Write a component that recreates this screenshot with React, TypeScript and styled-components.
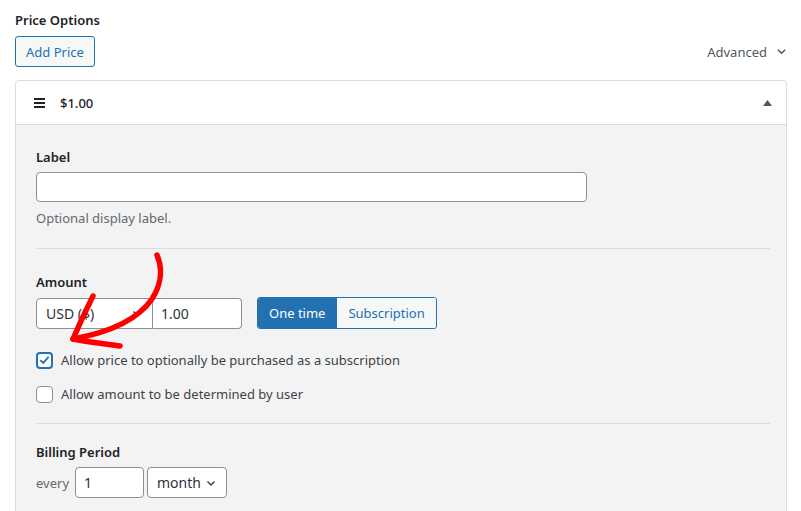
import React from 'react';
import styled, { createGlobalStyle } from 'styled-components';

const GlobalStyle = createGlobalStyle`
  html, body {
    margin: 0;
    padding: 0;
    background: #ffffff;
  }
  body {
    font-family: 'Noto Sans', 'Open Sans', Arial, sans-serif;
    color: #3c434a;
    font-size: 13px;
  }
  * {
    box-sizing: border-box;
  }
`;

export default function App() {
  return (
    <>
      <GlobalStyle />
      <Wrapper>
        <Heading>Price Options</Heading>
        <Toolbar>
          <OutlineButton>Add Price</OutlineButton>
          <Advanced>
            Advanced
            <svg width="11" height="11" viewBox="0 0 12 12">
              <path d="M2 4 L6 8 L10 4" fill="none" stroke="#50575e" strokeWidth="1.6" />
            </svg>
          </Advanced>
        </Toolbar>

        <Panel>
          <PanelHeader>
            <HeaderLeft>
              <svg width="11" height="10" viewBox="0 0 11 10">
                <rect x="0" y="0" width="11" height="2" fill="#1d2327" />
                <rect x="0" y="4" width="11" height="2" fill="#1d2327" />
                <rect x="0" y="8" width="11" height="2" fill="#1d2327" />
              </svg>
              <PriceTitle>$1.00</PriceTitle>
            </HeaderLeft>
            <svg width="9" height="6" viewBox="0 0 9 6">
              <path d="M0 6 L4.5 0 L9 6 Z" fill="#50575e" />
            </svg>
          </PanelHeader>

          <PanelBody>
            <Section>
              <FieldLabel>Label</FieldLabel>
              <TextInput width={551} />
              <Hint>Optional display label.</Hint>
            </Section>

            <Divider before={21} after={24} />

            <Section>
              <FieldLabel>Amount</FieldLabel>
              <AmountRow>
                <Joined>
                  <SelectBox width={117} joined="left">
                    USD ($)
                    <Chevron />
                  </SelectBox>
                  <ValueBox width={89} joined="right">1.00</ValueBox>
                </Joined>
                <Segmented>
                  <Segment active>One time</Segment>
                  <Segment>Subscription</Segment>
                </Segmented>
              </AmountRow>
              <Checks>
                <CheckRow>
                  <CheckBox checked>
                    <svg width="14" height="14" viewBox="0 0 14 14">
                      <path d="M2.5 7.2 L5.6 10.2 L11.5 3.6" fill="none" stroke="#2271b1" strokeWidth="2" />
                    </svg>
                  </CheckBox>
                  Allow price to optionally be purchased as a subscription
                </CheckRow>
                <CheckRow>
                  <CheckBox />
                  Allow amount to be determined by user
                </CheckRow>
              </Checks>
            </Section>

            <Divider before={20} after={19} />

            <Section>
              <FieldLabel>Billing Period</FieldLabel>
              <BillingRow>
                <span>every</span>
                <ValueBox width={69}>1</ValueBox>
                <SelectBox width={80}>
                  month
                  <Chevron />
                </SelectBox>
              </BillingRow>
            </Section>
          </PanelBody>
        </Panel>

        <ArrowOverlay width="120" height="110" viewBox="0 0 120 110">
          <path
            d="M102 6 C108 20 106 36 97 50 C86 66 62 82 18 90"
            fill="none"
            stroke="#ff0000"
            strokeWidth="5.5"
            strokeLinecap="round"
          />
          <path
            d="M38 47 C31 61 24 76 18 90 C34 93 50 95 65 97"
            fill="none"
            stroke="#ff0000"
            strokeWidth="5.5"
            strokeLinecap="round"
            strokeLinejoin="round"
          />
        </ArrowOverlay>
      </Wrapper>
    </>
  );
}

function Chevron() {
  return (
    <svg width="10" height="10" viewBox="0 0 10 10">
      <path d="M1.5 3.5 L5 7 L8.5 3.5" fill="none" stroke="#3c434a" strokeWidth="1.5" />
    </svg>
  );
}

const Wrapper = styled.div`
  position: relative;
  padding: 11px 14px 0 15px;
  height: 511px;
  overflow: hidden;
`;

const Heading = styled.div`
  font-size: 13px;
  font-weight: 600;
  line-height: 18px;
  color: #1d2327;
`;

const Toolbar = styled.div`
  display: flex;
  justify-content: space-between;
  align-items: center;
  margin-top: 7px;
`;

const OutlineButton = styled.button`
  height: 31px;
  padding: 0 10px;
  border: 1px solid #2271b1;
  border-radius: 3px;
  background: #f6f7f7;
  color: #2271b1;
  font-family: inherit;
  font-size: 13px;
`;

const Advanced = styled.div`
  display: flex;
  align-items: center;
  gap: 9px;
  color: #50575e;
  font-size: 13px;
`;

const Panel = styled.div`
  margin-top: 13px;
  border: 1px solid #dcdcde;
  border-radius: 4px;
  background: #f3f3f3;
`;

const PanelHeader = styled.div`
  height: 44px;
  display: flex;
  align-items: center;
  justify-content: space-between;
  padding: 0 14px 0 18px;
  background: #ffffff;
  border-bottom: 1px solid #dcdcde;
  border-radius: 4px 4px 0 0;
`;

const HeaderLeft = styled.div`
  display: flex;
  align-items: center;
  gap: 15px;
`;

const PriceTitle = styled.span`
  font-size: 13px;
  font-weight: 500;
  color: #1d2327;
`;

const PanelBody = styled.div`
  padding: 23px 16px 20px 20px;
`;

const Section = styled.div`
  display: flex;
  flex-direction: column;
`;

const FieldLabel = styled.div`
  font-size: 13px;
  font-weight: 600;
  line-height: 18px;
  color: #1d2327;
  margin-bottom: 6px;
`;

const TextInput = styled.div<{ width: number }>`
  width: ${(p) => p.width}px;
  height: 30px;
  background: #ffffff;
  border: 1px solid #8c8f94;
  border-radius: 4px;
`;

const Hint = styled.div`
  margin-top: 7px;
  line-height: 18px;
  font-size: 13px;
  color: #646970;
`;

const Divider = styled.hr<{ before: number; after: number }>`
  border: 0;
  border-top: 1px solid #dcdcde;
  margin: ${(p) => p.before}px 0 ${(p) => p.after}px;
`;

const AmountRow = styled.div`
  display: flex;
  align-items: center;
  gap: 15px;
`;

const Joined = styled.div`
  display: flex;
`;

const fieldBase = `
  height: 31px;
  display: flex;
  align-items: center;
  background: #ffffff;
  border: 1px solid #8c8f94;
  color: #2c3338;
  font-size: 14px;
`;

const SelectBox = styled.div<{ width: number; joined?: 'left' | 'right' }>`
  ${fieldBase}
  width: ${(p) => p.width}px;
  justify-content: space-between;
  padding: 0 10px 0 9px;
  border-radius: ${(p) => (p.joined === 'left' ? '4px 0 0 4px' : '4px')};
`;

const ValueBox = styled.div<{ width: number; joined?: 'left' | 'right' }>`
  ${fieldBase}
  width: ${(p) => p.width}px;
  padding: 0 8px;
  border-radius: ${(p) => (p.joined === 'right' ? '0 4px 4px 0' : '4px')};
  ${(p) => (p.joined === 'right' ? 'border-left: 0;' : '')}
`;

const Segmented = styled.div`
  display: flex;
  height: 32px;
  border: 1px solid #2271b1;
  border-radius: 3px;
  overflow: hidden;
`;

const Segment = styled.div<{ active?: boolean }>`
  display: flex;
  align-items: center;
  padding: 0 11px;
  font-size: 13px;
  background: ${(p) => (p.active ? '#2271b1' : '#f6f7f7')};
  color: ${(p) => (p.active ? '#ffffff' : '#2271b1')};
  & + & {
    border-left: 1px solid #2271b1;
  }
`;

const Checks = styled.div`
  display: flex;
  flex-direction: column;
  gap: 16px;
  margin-top: 22px;
`;

const CheckRow = styled.label`
  display: flex;
  align-items: center;
  gap: 8px;
  font-size: 13px;
  color: #3c434a;
`;

const CheckBox = styled.span<{ checked?: boolean }>`
  width: 17px;
  height: 17px;
  display: flex;
  align-items: center;
  justify-content: center;
  background: #ffffff;
  border: ${(p) => (p.checked ? '2px solid #2271b1' : '1px solid #8c8f94')};
  border-radius: 4px;
`;

const BillingRow = styled.div`
  display: flex;
  align-items: center;
  gap: 3px;
  font-size: 13px;
  color: #646970;
  & > span {
    margin-right: 3px;
  }
`;

const ArrowOverlay = styled.svg`
  position: absolute;
  left: 55px;
  top: 249px;
  pointer-events: none;
`;
